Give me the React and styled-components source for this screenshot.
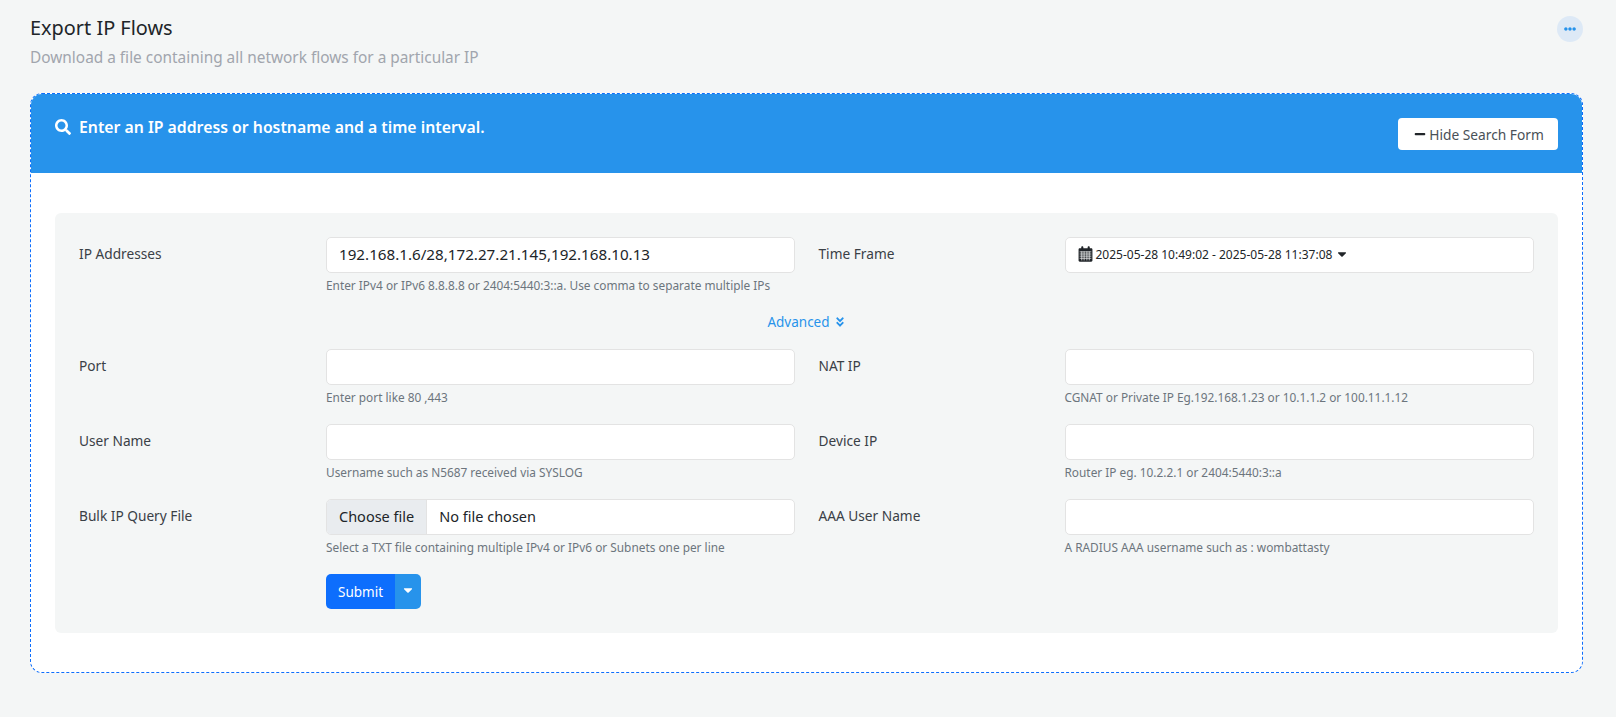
import React from "react";
import styled, { createGlobalStyle } from "styled-components";
import {
  FaSearch,
  FaMinus,
  FaAngleDoubleDown,
  FaEllipsisH,
  FaCaretDown,
} from "react-icons/fa";

const GlobalStyle = createGlobalStyle`
  * { box-sizing: border-box; }
  html, body { margin: 0; padding: 0; }
  body {
    background: #f4f6f6;
    font-family: "Noto Sans", "Lato", sans-serif;
    color: #212529;
    font-size: 14px;
  }
`;

function CalendarIcon() {
  return (
    <svg width="15" height="16" viewBox="0 0 14 15" fill="#212529">
      <path d="M0.5 3.2c0-.6.5-1.1 1.1-1.1H3V1.3c0-.6.4-1 1-1s1 .4 1 1v.8h4V1.3c0-.6.4-1 1-1s1 .4 1 1v.8h1.4c.6 0 1.1.5 1.1 1.1v10.4c0 .6-.5 1.1-1.1 1.1H1.600c-.6 0-1.100-.5-1.100-1.100z" />
      <path
        d="M1.500 5.500h11M1.500 7.500h11M1.500 9.500h11M1.500 11.500h11M3.500 5v8.500M5.700 5v8.500M8.300 5v8.500M10.500 5v8.500"
        stroke="#f4f6f6"
        strokeWidth="0.7"
      />
    </svg>
  );
}

const fields = [
  [
    { label: "Port", help: "Enter port like 80 ,443" },
    { label: "NAT IP", help: "CGNAT or Private IP Eg.192.168.1.23 or 10.1.1.2 or 100.11.1.12" },
  ],
  [
    { label: "User Name", help: "Username such as N5687 received via SYSLOG" },
    { label: "Device IP", help: "Router IP eg. 10.2.2.1 or 2404:5440:3::a" },
  ],
];

export default function App() {
  return (
    <>
      <GlobalStyle />
      <Page>
        <PageHead>
          <div>
            <Title>Export IP Flows</Title>
            <Subtitle>Download a file containing all network flows for a particular IP</Subtitle>
          </div>
          <MoreButton>
            <FaEllipsisH size={12} />
          </MoreButton>
        </PageHead>

        <Card>
          <CardHeader>
            <CardTitle>
              <FaSearch size={16} />
              Enter an IP address or hostname and a time interval.
            </CardTitle>
            <HideButton>
              <FaMinus size={12} />
              Hide Search Form
            </HideButton>
          </CardHeader>

          <CardBody>
            <Panel>
              <Row>
                <Col>
                  <Label>IP Addresses</Label>
                  <div>
                    <Input defaultValue="192.168.1.6/28,172.27.21.145,192.168.10.13" />
                    <Help>Enter IPv4 or IPv6 8.8.8.8 or 2404:5440:3::a. Use comma to separate multiple IPs</Help>
                  </div>
                </Col>
                <Col $right>
                  <Label>Time Frame</Label>
                  <DateBox>
                    <CalendarIcon />
                    2025-05-28 10:49:02 - 2025-05-28 11:37:08
                    <FaCaretDown size={14} />
                  </DateBox>
                </Col>
              </Row>

              <AdvancedRow>
                <AdvancedLink>
                  Advanced <FaAngleDoubleDown size={12} />
                </AdvancedLink>
              </AdvancedRow>

              {fields.map((row) => (
                <Row key={row[0].label}>
                  {row.map((f, i) => (
                    <Col key={f.label} $right={i === 1}>
                      <Label>{f.label}</Label>
                      <div>
                        <Input />
                        <Help>{f.help}</Help>
                      </div>
                    </Col>
                  ))}
                </Row>
              ))}

              <Row>
                <Col>
                  <Label>Bulk IP Query File</Label>
                  <div>
                    <FileBox>
                      <FileButton>Choose file</FileButton>
                      <FileName>No file chosen</FileName>
                    </FileBox>
                    <Help>Select a TXT file containing multiple IPv4 or IPv6 or Subnets one per line</Help>
                  </div>
                </Col>
                <Col $right>
                  <Label>AAA User Name</Label>
                  <div>
                    <Input />
                    <Help>A RADIUS AAA username such as : wombattasty</Help>
                  </div>
                </Col>
              </Row>

              <SubmitRow>
                <SubmitButton>Submit</SubmitButton>
                <SubmitCaret>
                  <FaCaretDown size={14} />
                </SubmitCaret>
              </SubmitRow>
            </Panel>
          </CardBody>
        </Card>
      </Page>
    </>
  );
}

const Page = styled.div`
  width: 1616px;
  height: 717px;
  padding: 14px 33px 0 30px;
  overflow: hidden;
`;
const PageHead = styled.div`
  display: flex;
  justify-content: space-between;
  align-items: flex-start;
  height: 79px;
`;
const Title = styled.h1`
  margin: 0;
  font-size: 19.9px;
  line-height: 27px;
  font-weight: 400;
  color: #212529;
`;
const Subtitle = styled.p`
  margin: 6px 0 0;
  font-size: 15.4px;
  line-height: 22px;
  color: #a1a5ad;
`;
const MoreButton = styled.div`
  width: 26px;
  height: 26px;
  margin: 2px 0 0;
  border-radius: 50%;
  background: #dde9f6;
  color: #2793eb;
  display: flex;
  align-items: center;
  justify-content: center;
`;
const Card = styled.div`
  height: 580px;
  background: #fff;
  border: 1px dashed #0d6efd;
  border-radius: 12px;
  overflow: hidden;
`;
const CardHeader = styled.div`
  height: 79px;
  background: #2793eb;
  padding: 22px 24px 0;
  display: flex;
  justify-content: space-between;
  align-items: flex-start;
`;
const CardTitle = styled.div`
  display: flex;
  align-items: center;
  gap: 8px;
  color: #fff;
  font-size: 15.8px;
  font-weight: 600;
  line-height: 22px;
`;
const HideButton = styled.div`
  width: 160px;
  height: 32px;
  margin-top: 2px;
  padding-left: 2px;
  background: #fff;
  border-radius: 4px;
  color: #495057;
  font-size: 13.75px;
  display: flex;
  align-items: center;
  justify-content: center;
  gap: 3px;
  svg { color: #212529; }
`;
const CardBody = styled.div`
  padding: 40px 24px;
`;
const Panel = styled.div`
  height: 420px;
  background: #f4f6f6;
  border-radius: 6px;
  padding: 24px;
`;
const Row = styled.div`
  display: flex;
  gap: 24px;
  height: 75px;
`;
const Col = styled.div`
  flex: 1;
  display: grid;
  grid-template-columns: ${(p) => (p.$right ? "246px" : "247px")} 1fr;
`;
const Label = styled.div`
  font-size: 13.7px;
  line-height: 34px;
  color: #3a4046;
`;
const Input = styled.input`
  display: block;
  width: 100%;
  height: 36px;
  padding: 0 12px 3px;
  background: #fff;
  border: 1px solid #e3e3e3;
  border-radius: 5px;
  font: inherit;
  font-size: 15.2px;
  color: #212529;
  outline: none;
`;
const DateBox = styled.div`
  height: 36px;
  padding: 0 12px 2px;
  background: #fff;
  border: 1px solid #e3e3e3;
  border-radius: 5px;
  display: flex;
  align-items: center;
  gap: 3px;
  font-size: 12px;
  color: #212529;
`;
const FileBox = styled.div`
  display: flex;
  height: 36px;
  background: #fff;
  border: 1px solid #e3e3e3;
  border-radius: 5px;
  overflow: hidden;
  font-size: 14.5px;
`;
const FileButton = styled.div`
  padding: 0 12px;
  line-height: 33px;
  background: #e9ecef;
  border-right: 1px solid #e3e3e3;
`;
const FileName = styled.div`
  padding: 0 12px;
  line-height: 33px;
`;
const Help = styled.div`
  margin-top: 3px;
  font-size: 11.85px;
  line-height: 18px;
  color: #6c757d;
`;
const AdvancedRow = styled.div`
  height: 37px;
  display: flex;
  justify-content: center;
  align-items: flex-start;
`;
const AdvancedLink = styled.a`
  display: inline-flex;
  align-items: center;
  gap: 4px;
  font-size: 13.5px;
  line-height: 20px;
  color: #2793eb;
`;
const SubmitRow = styled.div`
  display: flex;
  margin-left: 247px;
`;
const SubmitButton = styled.div`
  width: 69px;
  height: 35px;
  background: #0d6efd;
  color: #fff;
  font-size: 13.5px;
  border-radius: 5px 0 0 5px;
  display: flex;
  align-items: center;
  justify-content: center;
`;
const SubmitCaret = styled.div`
  width: 26px;
  height: 35px;
  padding-bottom: 3px;
  background: #2793eb;
  color: #fff;
  border-radius: 0 5px 5px 0;
  display: flex;
  align-items: center;
  justify-content: center;
`;
